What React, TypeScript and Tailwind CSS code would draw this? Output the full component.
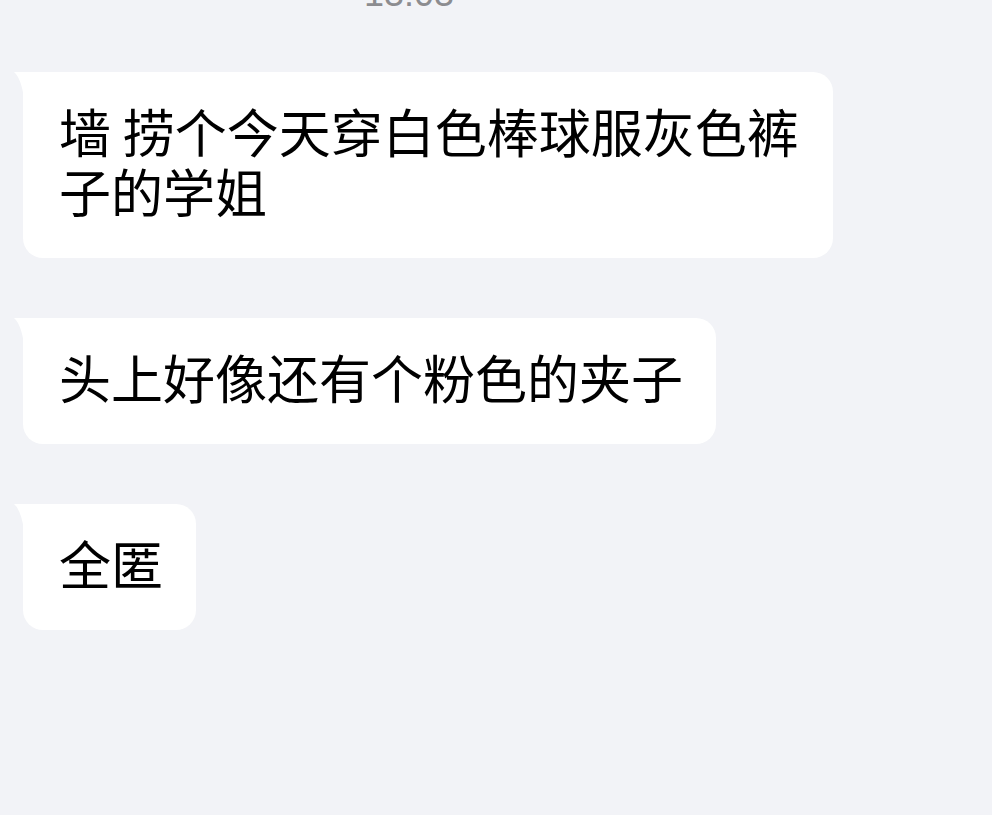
const messages = [
  '墙 捞个今天穿白色棒球服灰色裤子的学姐',
  '头上好像还有个粉色的夹子',
  '全匿',
];

const Bubble = ({ text }: { text: string }) => (
  <div className="relative w-fit rounded-[20px] rounded-tl-none bg-white pl-[36px] pr-[33px] pt-[29px] pb-[37px]">
    <svg
      className="absolute -left-[9px] top-0"
      width="10"
      height="26"
      viewBox="0 0 10 26"
    >
      <path d="M10 0 L0 0 Q7 6 10 26 Z" fill="#ffffff" />
    </svg>
    <p className="max-w-[741px] text-[52px] leading-[60px] text-black">{text}</p>
  </div>
);

export default function App() {
  return (
    <div
      className="min-h-[815px] w-full overflow-hidden bg-[#f2f3f7]"
      style={{ fontFamily: '"Noto Sans CJK SC", "Noto Sans", sans-serif' }}
    >
      <div className="flex h-[72px] items-start overflow-hidden">
        <span
          className="-mt-[22px] ml-[364px] text-[36px] leading-[32px] text-[#8c8c90]"
          style={{ fontFamily: '"Liberation Sans", sans-serif' }}
        >
          13:03
        </span>
      </div>
      <div className="flex flex-col gap-[60px] pl-[23px]">
        {messages.map((m) => (
          <Bubble key={m} text={m} />
        ))}
      </div>
    </div>
  );
}
